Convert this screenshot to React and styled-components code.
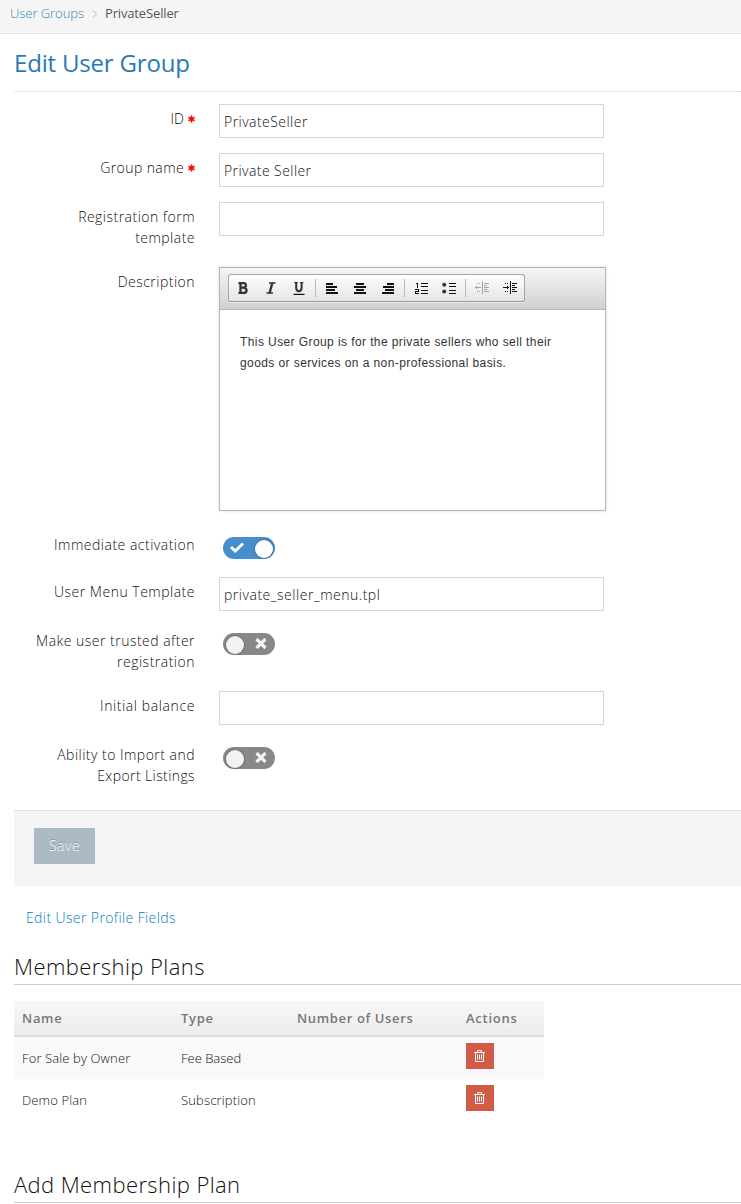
import React from "react";
import styled, { createGlobalStyle } from "styled-components";

const Global = createGlobalStyle`
  *, *::before, *::after { box-sizing: border-box; }
  body { margin: 0; background: #fff; color: #393939; font: 14px/21px "Open Sans", sans-serif; overflow: hidden; }
`;

const Page = styled.div`height: 1204px; overflow: hidden;`;
const T = styled.span`letter-spacing: ${(p) => p.$ls || 0}px; white-space: nowrap;`;

const Breadcrumb = styled.nav`
  display: flex; align-items: center; height: 34px; padding: 0 10px 6px;
  background: #f5f5f5; border-bottom: 1px solid #e5e5e5; font-size: 13px; color: #555;
  svg { margin: 1px 7px 0 8px; }
`;
const Crumb = styled.a`color: #2f86c0; font-weight: 300;`;
const Main = styled.main`padding-left: 14px;`;
const PageTitle = styled.h1`
  margin: 0 0 12px; height: 58px; padding-top: 13px; font-size: 24px; line-height: 31px;
  font-weight: 400; color: #2679b5; border-bottom: 1px dotted #d5d5d5;
`;
const Row = styled.div`display: flex; align-items: flex-start; height: ${(p) => p.$h}px;`;
const Label = styled.label`
  width: 181px; margin-right: 24px; padding-top: 4px; text-align: right; font-weight: 300; color: #111;
`;
const Required = styled.svg`margin: -1px 0 1px 4px; vertical-align: middle;`;
const Input = styled.div`
  width: 385px; height: 34px; padding: 6px 4px; border: 1px solid #d5d5d5; color: #111; font-weight: 300;
`;
const Editor = styled.div`
  width: 387px; height: 244px; border: 1px solid #b6b6b6; box-shadow: 0 0 3px rgba(0,0,0,.15);
`;
const Toolbar = styled.div`
  height: 42px; padding: 6px 8px; border-bottom: 1px solid #b6b6b6;
  background: linear-gradient(#f5f5f5, #cfd1cf);
`;
const ToolGroup = styled.div`
  display: flex; align-items: center; width: 297px; height: 28px; border: 1px solid #a6a6a6;
  border-bottom-color: #979797; border-radius: 3px; background: linear-gradient(#fff, #e4e4e4);
  box-shadow: 0 1px 0 rgba(255,255,255,.5);
`;
const Tool = styled.span`
  display: flex; align-items: center; justify-content: center; width: 28px; height: 26px;
  opacity: ${(p) => (p.$off ? 0.35 : 1)};
`;
const Sep = styled.span`width: 1px; height: 18px; background: #bcbcbc; margin: 0 2px;`;
const EditorText = styled.div`
  padding: 22px 20px; font: 12px/21px "Liberation Sans", Arial, sans-serif; color: #333;
`;
const Switch = styled.div`
  display: flex; align-items: center; justify-content: space-between;
  flex-direction: ${(p) => (p.$on ? "row" : "row-reverse")};
  width: 52px; height: 22px; margin: 7px 0 0 4px; border-radius: 11px;
  padding: ${(p) => (p.$on ? "0 1px 0 7px" : "0 8px 0 3px")};
  background: ${(p) => (p.$on ? "#468fcc" : "#888")};
  svg { margin-bottom: 2px; }
`;
const Knob = styled.span`
  width: 18px; height: 18px; margin: 1px ${(p) => (p.$on ? 1 : 0)}px 0 0; border-radius: 50%;
  background: ${(p) => (p.$on ? "#fff" : "#f2f2f2")};
  box-shadow: 0 0 1px 1px rgba(0,0,0,.18);
`;
const Actions = styled.div`
  height: 76px; padding: 17px 20px; background: #f5f5f5; border-top: 1px solid #e5e5e5;
`;
const Save = styled.button`
  display: block; width: 61px; height: 36px; padding: 0; border: 0; background: #abbac3; color: #fff;
  font: 300 14px/36px "Open Sans", sans-serif; text-shadow: 0 -1px 0 rgba(0,0,0,.25);
`;
const ProfileLink = styled.a`display: block; padding: 21px 12px 0; height: 63px; color: #0080c4; font-weight: 300;`;
const Section = styled.h2`
  margin: 0; height: 36px; padding-top: 2px; border-bottom: 1px solid #ccc;
  font-size: 22px; line-height: 30px; font-weight: 300; color: #111;
`;
const Table = styled.div`width: 530px; margin: 16px 0 46px; font-size: 13px;`;
const Line = styled.div`
  display: grid; grid-template-columns: 159px 116px 169px 1fr; align-items: center;
  height: 42px; padding: 0 8px; background: ${(p) => (p.$odd ? "#f9f9f9" : "#fff")}; font-weight: 300; color: #111;
`;
const Head = styled(Line)`
  height: 36px; border-bottom: 2px solid #ddd; background: linear-gradient(#f8f8f8, #ececec);
  font-weight: 600; color: #777;
`;
const Delete = styled.button`
  display: flex; align-items: center; justify-content: center; width: 28px; height: 26px; padding: 0 1px 0 0;
  margin-bottom: 4px; border: 0; background: #d15b47;
`;

const Star = () => (
  <Required width="7" height="8" viewBox="0 0 7 8">
    <path d="M3.5 .5v7M.5 2.2l6 3.6M6.5 2.2l-6 3.6" stroke="#f00" strokeWidth="1.6" />
  </Required>
);

const Bars = ({ rows }) => (
  <svg width="12" height="12" viewBox="0 0 12 12" shapeRendering="crispEdges">
    {rows.map(([x, w], i) => <rect key={i} x={x} y={i * 3 + 1} width={w} height="2" fill="#111" />)}
  </svg>
);

const Bold = () => (
  <svg width="10" height="12" viewBox="0 0 10 12" fill="none" stroke="#333">
    <path d="M2.5 1v10M.5 1h4.7C9.2 1 8.6 5.7 5 5.7H2M5 5.7c5 0 4.5 5.3 0 5.3H.5" strokeWidth="2.3" />
  </svg>
);
const Italic = () => (
  <svg width="10" height="12" viewBox="0 0 10 12" fill="none" stroke="#333">
    <path d="M3 1h6.5M.5 11H7" strokeWidth="1.6" /><path d="M6.3 1L3.6 11" strokeWidth="2.4" />
  </svg>
);
const Underline = () => (
  <svg width="12" height="13" viewBox="0 0 12 13" fill="none" stroke="#333">
    <path d="M3.2 0v6c0 4.2 5.4 4.2 5.4 0V0" strokeWidth="2" /><path d="M1 .6h4M7 .6h3.5" />
    <path d="M.5 12.4h11" stroke="#111" strokeWidth="1.2" />
  </svg>
);
const Numbered = () => (
  <svg width="13" height="14" viewBox="0 0 13 14" fill="none" stroke="#111" shapeRendering="crispEdges">
    <path d="M6 2.5h7M6 5.5h7M6 9.5h7M6 12.5h7" />
    <path d="M1 2.5h1.5v4M0 8.5h3.5v2h-3v2H4" />
  </svg>
);
const Bullets = () => (
  <svg width="14" height="12" viewBox="0 0 14 12" fill="#333">
    <circle cx="2.2" cy="2.8" r="2" /><circle cx="2.2" cy="9.6" r="2" />
    <path d="M6.5 1.5h7M6.5 4.5h7M6.5 8.5h7M6.5 11.5h7" stroke="#111" shapeRendering="crispEdges" />
  </svg>
);
const Indent = ({ out }) => (
  <svg width="15" height="14" viewBox="0 0 15 14" fill="none" stroke="#111" shapeRendering="crispEdges">
    <path d="M7.5 0v13M9 2.5h5M9 4.5h3M9 6.5h5M9 8.5h3M9 10.5h5M0 6.5h6" />
    <path d="M2 2.5h1M4 2.5h1M2 10.5h1M4 10.5h1" />
    <path d={out ? "M1.5 5v3" : "M4.5 5v3"} />
  </svg>
);
const Trash = () => (
  <svg width="11" height="12" viewBox="0 0 11 12" fill="none" stroke="#fff">
    <path d="M0 2.5h11M3.5 2V.6h4V2M1.5 3v8.5h8V3M3.5 4.5v5M5.5 4.5v5M7.5 4.5v5" />
  </svg>
);
const Check = () => (
  <svg width="14" height="11" viewBox="0 0 14 11" fill="none" stroke="#fff" strokeWidth="3">
    <path d="M1 5l4.2 4L13 1.5" />
  </svg>
);
const Cross = () => (
  <svg width="12" height="11" viewBox="0 0 12 11" fill="none" stroke="#f4f4f4" strokeWidth="3.2">
    <path d="M1.5 1l9 9M10.5 1l-9 9" />
  </svg>
);

const Toggle = ({ on }) => (
  <Switch $on={on}>{on ? <Check /> : <Cross />}<Knob $on={on} /></Switch>
);

const Field = ({ h, label, required, children }) => (
  <Row $h={h}>
    <Label>
      {label.map(([text, ls = 0.48], i) => <React.Fragment key={text}>{i > 0 && <br />}<T $ls={ls}>{text}</T></React.Fragment>)}
      {required && <Star />}
    </Label>
    {children}
  </Row>
);

const plans = [["For Sale by Owner", "Fee Based"], ["Demo Plan", "Subscription"]];

export default function App() {
  return (
    <Page>
      <Global />
      <Breadcrumb>
        <Crumb><T $ls={-0.05}>User Groups</T></Crumb>
        <svg width="6" height="8" viewBox="0 0 6 8" fill="none" stroke="#b2b6bf"><path d="M1 .5L4.5 4 1 7.5" /></svg>
        <T $ls={-0.15}>PrivateSeller</T>
      </Breadcrumb>
      <Main>
        <PageTitle><T $ls={-0.18}>Edit User Group</T></PageTitle>
        <Field h={49} label={[["ID", 0.1]]} required><Input><T $ls={0.46}>PrivateSeller</T></Input></Field>
        <Field h={49} label={[["Group name", 0.4]]} required><Input><T $ls={0.43}>Private Seller</T></Input></Field>
        <Field h={65} label={[["Registration form"], ["template"]]}><Input /></Field>
        <Field h={263} label={[["Description"]]}>
          <Editor>
            <Toolbar>
              <ToolGroup>
                <Tool><Bold /></Tool><Tool><Italic /></Tool><Tool><Underline /></Tool>
                <Sep />
                <Tool><Bars rows={[[0, 7], [0, 11], [0, 9], [0, 12]]} /></Tool>
                <Tool><Bars rows={[[2, 8], [0, 12], [2, 8], [0, 12]]} /></Tool>
                <Tool><Bars rows={[[5, 7], [1, 11], [3, 9], [0, 12]]} /></Tool>
                <Sep />
                <Tool><Numbered /></Tool><Tool><Bullets /></Tool>
                <Sep />
                <Tool $off><Indent out /></Tool><Tool><Indent /></Tool>
              </ToolGroup>
            </Toolbar>
            <EditorText>
              <T $ls={0.41}>This User Group is for the private sellers who sell their</T><br />
              <T $ls={0.41}>goods or services on a non-professional basis.</T>
            </EditorText>
          </Editor>
        </Field>
        <Field h={47} label={[["Immediate activation", 0.5]]}><Toggle on /></Field>
        <Field h={49} label={[["User Menu Template", 0.5]]}><Input><T $ls={0.52}>private_seller_menu.tpl</T></Input></Field>
        <Field h={65} label={[["Make user trusted after"], ["registration", 0.5]]}><Toggle /></Field>
        <Field h={49} label={[["Initial balance", 0.6]]}><Input /></Field>
        <Field h={70} label={[["Ability to Import and"], ["Export Listings", 0.4]]}><Toggle /></Field>
        <Actions><Save><T $ls={0.5}>Save</T></Save></Actions>
        <ProfileLink><T $ls={0.39}>Edit User Profile Fields</T></ProfileLink>
        <Section><T $ls={0.43}>Membership Plans</T></Section>
        <Table>
          <Head><T $ls={0.7}>Name</T><T $ls={0.7}>Type</T><T $ls={0.64}>Number of Users</T><T $ls={0.75}>Actions</T></Head>
          {plans.map(([name, type], i) => (
            <Line key={name} $odd={i === 0}>
              <T $ls={0.12}>{name}</T><T $ls={i === 0 ? 0 : 0.15}>{type}</T><span />
              <Delete aria-label="Delete"><Trash /></Delete>
            </Line>
          ))}
        </Table>
        <Section><T $ls={0.4}>Add Membership Plan</T></Section>
      </Main>
    </Page>
  );
}
